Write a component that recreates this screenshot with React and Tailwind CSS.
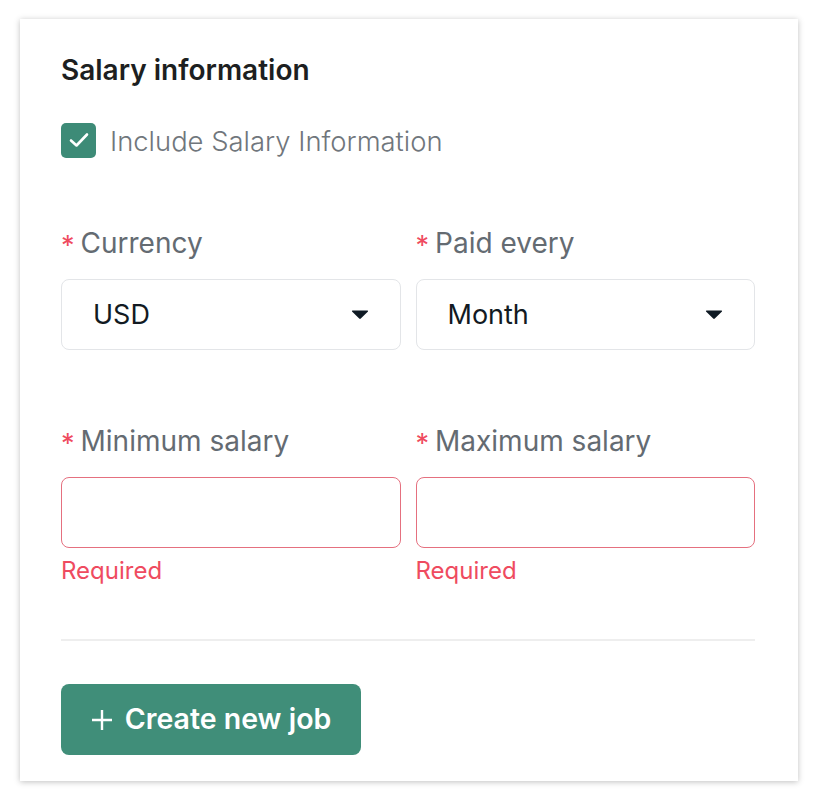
import React from "react";

function Caret() {
  return (
    <svg width="18" height="10" viewBox="0 0 18 10" className="shrink-0">
      <path d="M1 1.5 Q0.5 0.5 1.8 0.5 L16.2 0.5 Q17.5 0.5 17 1.5 L9.8 8.6 Q9 9.4 8.2 8.6 Z" fill="#0f1a24" />
    </svg>
  );
}

function Label({ children }) {
  return (
    <div className="flex items-center h-[40px] text-[28px] text-[#646b72] leading-none">
      <span className="text-[#ef4b60] text-[27px] mr-[6px] mt-[4px]">*</span>
      <span>{children}</span>
    </div>
  );
}

function Select({ value }) {
  return (
    <div className="h-[71px] border border-[#e3e5e8] rounded-[8px] flex items-center justify-between pl-[31px] pr-[31px] mt-[16px] bg-white">
      <span className="text-[27px] text-[#121a22] mt-[2px]">{value}</span>
      <Caret />
    </div>
  );
}

export default function App() {
  return (
    <div className="min-h-[801px] bg-white pt-[19px] pl-[20px]" style={{ fontFamily: "Inter, 'Noto Sans', sans-serif" }}>
      <div className="w-[778px] h-[762px] bg-white shadow-[0_1px_6px_rgba(0,0,0,0.25)] pl-[41px] pr-[43px] pt-[33px] flex flex-col">
        <div className="text-[28px] font-semibold text-[#1d1f21] leading-none h-[36px] flex items-center">Salary information</div>
        <div className="flex items-center mt-[34px] h-[36px]">
          <div className="w-[35px] h-[35px] rounded-[5px] bg-[#3d8b77] flex items-center justify-center">
            <svg width="22" height="18" viewBox="0 0 22 18">
              <path d="M3 9.5 L8.5 14.5 L19 3.5" stroke="white" strokeWidth="2.6" fill="none" strokeLinecap="round" strokeLinejoin="round" />
            </svg>
          </div>
          <span className="ml-[14px] mt-[4px] text-[27.4px] font-light text-[#70767c] leading-none">Include Salary Information</span>
        </div>
        <div className="grid grid-cols-2 gap-[15px] mt-[65px]">
          <div>
            <Label>Currency</Label>
            <Select value="USD" />
          </div>
          <div>
            <Label>Paid every</Label>
            <Select value="Month" />
          </div>
        </div>
        <div className="grid grid-cols-2 gap-[15px] mt-[71px]">
          <div>
            <Label>Minimum salary</Label>
            <div className="h-[71px] border border-[#e5707f] rounded-[8px] mt-[16px]" />
            <div className="text-[24px] text-[#ef4b60] leading-none mt-[10px] h-[26px] flex items-center">Required</div>
          </div>
          <div>
            <Label>Maximum salary</Label>
            <div className="h-[71px] border border-[#e5707f] rounded-[8px] mt-[16px]" />
            <div className="text-[24px] text-[#ef4b60] leading-none mt-[10px] h-[26px] flex items-center">Required</div>
          </div>
        </div>
        <div className="h-[2px] bg-[#eeeeee] mt-[55px]" />
        <div className="mt-[43px]">
          <button className="h-[71px] w-[300px] rounded-[8px] bg-[#408e79] text-white text-[28.5px] font-semibold flex items-center justify-center gap-[12px]">
            <svg width="22" height="22" viewBox="0 0 22 22">
              <path d="M11 1 V21 M1 11 H21" stroke="white" strokeWidth="2.4" />
            </svg>
            <span>Create new job</span>
          </button>
        </div>
      </div>
    </div>
  );
}
